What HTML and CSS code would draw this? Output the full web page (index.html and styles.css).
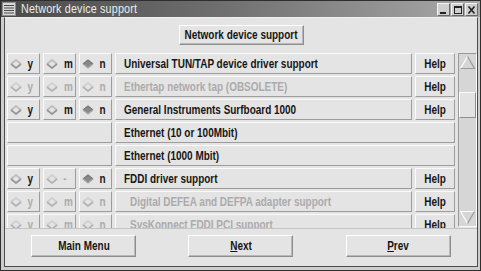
FILE: index.html
```html
<!DOCTYPE html>
<html>
<head>
<meta charset="utf-8">
<link rel="stylesheet" href="styles.css">
</head>
<body>
<svg class="defs" width="0" height="0">
  <defs>
    <symbol id="d-off" viewBox="0 0 12 10">
      <path d="M1 5 L6 1 L11 5" fill="none" stroke="#bcbcbc" stroke-width="1.7"/>
      <path d="M1 5 L6 9 L11 5" fill="none" stroke="#959595" stroke-width="1.7"/>
    </symbol>
    <symbol id="d-on" viewBox="0 0 12 10">
      <path d="M1 5 L6 1 L11 5 L6 9 Z" fill="#888888"/>
      <path d="M1 5 L6 1 L11 5" fill="none" stroke="#777777" stroke-width="1.3"/>
      <path d="M1 5 L6 9 L11 5" fill="none" stroke="#a8a8a8" stroke-width="1.3"/>
    </symbol>
    <symbol id="d-dis" viewBox="0 0 12 10">
      <path d="M1 5 L6 1 L11 5" fill="none" stroke="#cfcfcf" stroke-width="1.7"/>
      <path d="M1 5 L6 9 L11 5" fill="none" stroke="#b2b2b2" stroke-width="1.7"/>
    </symbol>
  </defs>
</svg>
<div class="window">
  <div class="titlebar">
    <svg class="winicon" width="14" height="14" viewBox="0 0 14 14">
      <rect x="0.5" y="0.5" width="13" height="13" fill="#d8d8d8" stroke="#8a8a8a"/>
      <path d="M2 3.5H12M2 6H12M2 8.5H12M2 11H12" stroke="#4a4a4a" stroke-width="1.2"/>
    </svg>
    <span class="title"><span class="t tl">Network device support</span></span>
    <div class="tbtns">
      <span class="tbtn"><svg width="11" height="11" viewBox="0 0 11 11"><rect x="2" y="8" width="6" height="2" fill="#222"/></svg></span>
      <span class="tbtn"><svg width="11" height="11" viewBox="0 0 11 11"><rect x="2.5" y="2.5" width="7" height="7" fill="none" stroke="#222"/><rect x="2" y="2" width="8" height="2" fill="#222"/></svg></span>
      <span class="tbtn"><svg width="11" height="11" viewBox="0 0 11 11"><path d="M2.5 2.5L8.5 9.5M8.5 2.5L2.5 9.5" stroke="#222" stroke-width="1.6"/></svg></span>
    </div>
  </div>
  <div class="frame">
    <div class="client">
      <div class="top">
        <div class="btn hdr"><span class="t">Network device support</span></div>
      </div>
      <div class="scroll">
        <div class="rows">
          <div class="row">
            <div class="box opt"><svg class="dia"><use href="#d-off"/></svg><span class="t">y</span></div>
            <div class="box opt"><svg class="dia"><use href="#d-off"/></svg><span class="t">m</span></div>
            <div class="box opt"><svg class="dia"><use href="#d-on"/></svg><span class="t">n</span></div>
            <div class="box label"><span class="t tl">Universal TUN/TAP device driver support</span></div>
            <div class="box help"><span class="t">Help</span></div>
          </div>
          <div class="row">
            <div class="box opt dis"><svg class="dia"><use href="#d-dis"/></svg><span class="t">y</span></div>
            <div class="box opt dis"><svg class="dia"><use href="#d-dis"/></svg><span class="t">m</span></div>
            <div class="box opt dis"><svg class="dia"><use href="#d-dis"/></svg><span class="t">n</span></div>
            <div class="box label dis"><span class="t tl">Ethertap network tap (OBSOLETE)</span></div>
            <div class="box help"><span class="t">Help</span></div>
          </div>
          <div class="row">
            <div class="box opt"><svg class="dia"><use href="#d-off"/></svg><span class="t">y</span></div>
            <div class="box opt"><svg class="dia"><use href="#d-off"/></svg><span class="t">m</span></div>
            <div class="box opt"><svg class="dia"><use href="#d-on"/></svg><span class="t">n</span></div>
            <div class="box label"><span class="t tl">General Instruments Surfboard 1000</span></div>
            <div class="box help"><span class="t">Help</span></div>
          </div>
          <div class="row">
            <div class="box span3"></div>
            <div class="box label span2"><span class="t tl">Ethernet (10 or 100Mbit)</span></div>
          </div>
          <div class="row">
            <div class="box span3"></div>
            <div class="box label span2"><span class="t tl">Ethernet (1000 Mbit)</span></div>
          </div>
          <div class="row">
            <div class="box opt"><svg class="dia"><use href="#d-off"/></svg><span class="t">y</span></div>
            <div class="box opt dis"><svg class="dia"><use href="#d-dis"/></svg><span class="t">-</span></div>
            <div class="box opt"><svg class="dia"><use href="#d-on"/></svg><span class="t">n</span></div>
            <div class="box label"><span class="t tl">FDDI driver support</span></div>
            <div class="box help"><span class="t">Help</span></div>
          </div>
          <div class="row">
            <div class="box opt dis"><svg class="dia"><use href="#d-dis"/></svg><span class="t">y</span></div>
            <div class="box opt dis"><svg class="dia"><use href="#d-dis"/></svg><span class="t">m</span></div>
            <div class="box opt dis"><svg class="dia"><use href="#d-dis"/></svg><span class="t">n</span></div>
            <div class="box label dis sub"><span class="t tl">Digital DEFEA and DEFPA adapter support</span></div>
            <div class="box help"><span class="t">Help</span></div>
          </div>
          <div class="row">
            <div class="box opt dis"><svg class="dia"><use href="#d-dis"/></svg><span class="t">y</span></div>
            <div class="box opt dis"><svg class="dia"><use href="#d-dis"/></svg><span class="t">m</span></div>
            <div class="box opt dis"><svg class="dia"><use href="#d-dis"/></svg><span class="t">n</span></div>
            <div class="box label dis sub"><span class="t tl">SysKonnect FDDI PCI support</span></div>
            <div class="box help"><span class="t">Help</span></div>
          </div>
        </div>
        <div class="sbar">
          <svg class="arrow" width="17" height="15" viewBox="0 0 17 15">
            <path d="M1.5 13.5 L8.5 1.5" stroke="#ffffff" stroke-width="1.2" fill="none"/>
            <path d="M8.5 1.5 L15.5 13.5 L1.5 13.5" stroke="#9a9a9a" stroke-width="1.2" fill="none"/>
          </svg>
          <div class="thumb"></div>
          <div class="spacer"></div>
          <svg class="arrow" width="17" height="15" viewBox="0 0 17 15">
            <path d="M1.5 1.5 L15.5 1.5 M1.5 1.5 L8.5 13.5" stroke="#ffffff" stroke-width="1.2" fill="none"/>
            <path d="M8.5 13.5 L15.5 1.5" stroke="#9a9a9a" stroke-width="1.2" fill="none"/>
          </svg>
        </div>
      </div>
      <div class="bottom">
        <div class="btn nav"><span class="t">Main Menu</span></div>
        <div class="btn nav"><span class="t"><u>N</u>ext</span></div>
        <div class="btn nav"><span class="t"><u>P</u>rev</span></div>
      </div>
    </div>
  </div>
</div>
</body>
</html>
```

FILE: styles.css
```css
* { box-sizing: border-box; }
html, body { margin: 0; padding: 0; }
body {
  width: 481px;
  height: 271px;
  overflow: hidden;
  background: #e4e4e4;
  font-family: "Liberation Sans", Arial, sans-serif;
  font-size: 12px;
  font-weight: bold;
  color: #161616;
}
.defs { position: absolute; width: 0; height: 0; }
.t {
  display: inline-block;
  white-space: nowrap;
  transform: scaleX(0.83);
  transform-origin: center center;
}
.t.tl { transform-origin: left center; }
.window {
  width: 481px;
  height: 271px;
  border: 1px solid #2e2e2e;
  background: #cdcdcd;
  display: flex;
  flex-direction: column;
}
.titlebar {
  height: 16px;
  display: flex;
  align-items: center;
  background: linear-gradient(to right, #4a4a4a 0%, #6e6e6e 45%, #a9a9a9 100%);
  padding-left: 1px;
}
.winicon { display: block; flex: none; }
.title {
  margin-left: 5px;
  font-weight: normal;
  font-size: 12.5px;
  color: #ececec;
  flex: 1;
}
.title .t { transform: scaleX(0.86); letter-spacing: 0.2px; }
.tbtns { display: flex; gap: 1px; margin-right: 2px; }
.tbtn {
  width: 13px;
  height: 13px;
  background: #cfcfcf;
  border: 1px solid;
  border-color: #f4f4f4 #6a6a6a #6a6a6a #f4f4f4;
  display: flex;
  align-items: center;
  justify-content: center;
}
.tbtn svg { display: block; }
.frame {
  flex: 1;
  padding: 0 2px 3px 3px;
  display: flex;
}
.client {
  flex: 1;
  border: 1px solid #4c4c4c;
  border-top-color: #f0f0f0;
  background: #e4e4e4;
  display: flex;
  flex-direction: column;
}
.top {
  height: 32px;
  display: flex;
  justify-content: center;
  padding-top: 7px;
}
.btn {
  border: 1px solid;
  border-color: #ffffff #8e8e8e #8e8e8e #ffffff;
  box-shadow: inset -1px -1px 0 #b8b8b8;
  background: #e4e4e4;
  display: flex;
  align-items: center;
  justify-content: center;
  white-space: nowrap;
}
.hdr { width: 125px; height: 20px; }
.scroll {
  height: 178px;
  overflow: hidden;
  display: flex;
  padding-top: 3px;
}
.rows {
  width: 448px;
  margin-left: 2px;
  flex: none;
}
.row {
  display: grid;
  grid-template-columns: 33px 33px 33px 1fr 40px;
  column-gap: 3px;
  height: 21px;
  margin-bottom: 2px;
}
.box {
  border: 1px solid;
  border-color: #fbfbfb #9c9c9c #9c9c9c #fbfbfb;
  background: #e4e4e4;
  display: flex;
  align-items: center;
  white-space: nowrap;
  overflow: hidden;
}
.opt { padding-left: 2px; }
.dia { width: 12px; height: 10px; margin-right: 5px; flex: none; display: block; }
.label { padding-left: 8px; }
.label.sub { padding-left: 14px; }
.help { justify-content: center; }
.dis { color: #ababab; }
.span3 { grid-column: 1 / span 3; }
.span2 { grid-column: 4 / span 2; }
.sbar {
  margin-left: 3px;
  width: 19px;
  height: 174px;
  flex: none;
  background: #d6d6d6;
  border: 1px solid;
  border-color: #9a9a9a #fafafa #fafafa #9a9a9a;
  display: flex;
  flex-direction: column;
  align-items: center;
  padding: 1px 0;
}
.arrow { display: block; flex: none; }
.thumb {
  width: 17px;
  height: 26px;
  margin-top: 22px;
  background: #e2e2e2;
  border: 1px solid;
  border-color: #fbfbfb #8e8e8e #8e8e8e #fbfbfb;
  flex: none;
}
.spacer { flex: 1; }
.bottom {
  flex: 1;
  border-top: 1px solid #c4c4c4;
  display: flex;
  justify-content: space-around;
  padding-top: 6px;
}
.nav { width: 105px; height: 22px; }
.nav u { text-decoration-thickness: 1px; text-underline-offset: 1px; }
```
